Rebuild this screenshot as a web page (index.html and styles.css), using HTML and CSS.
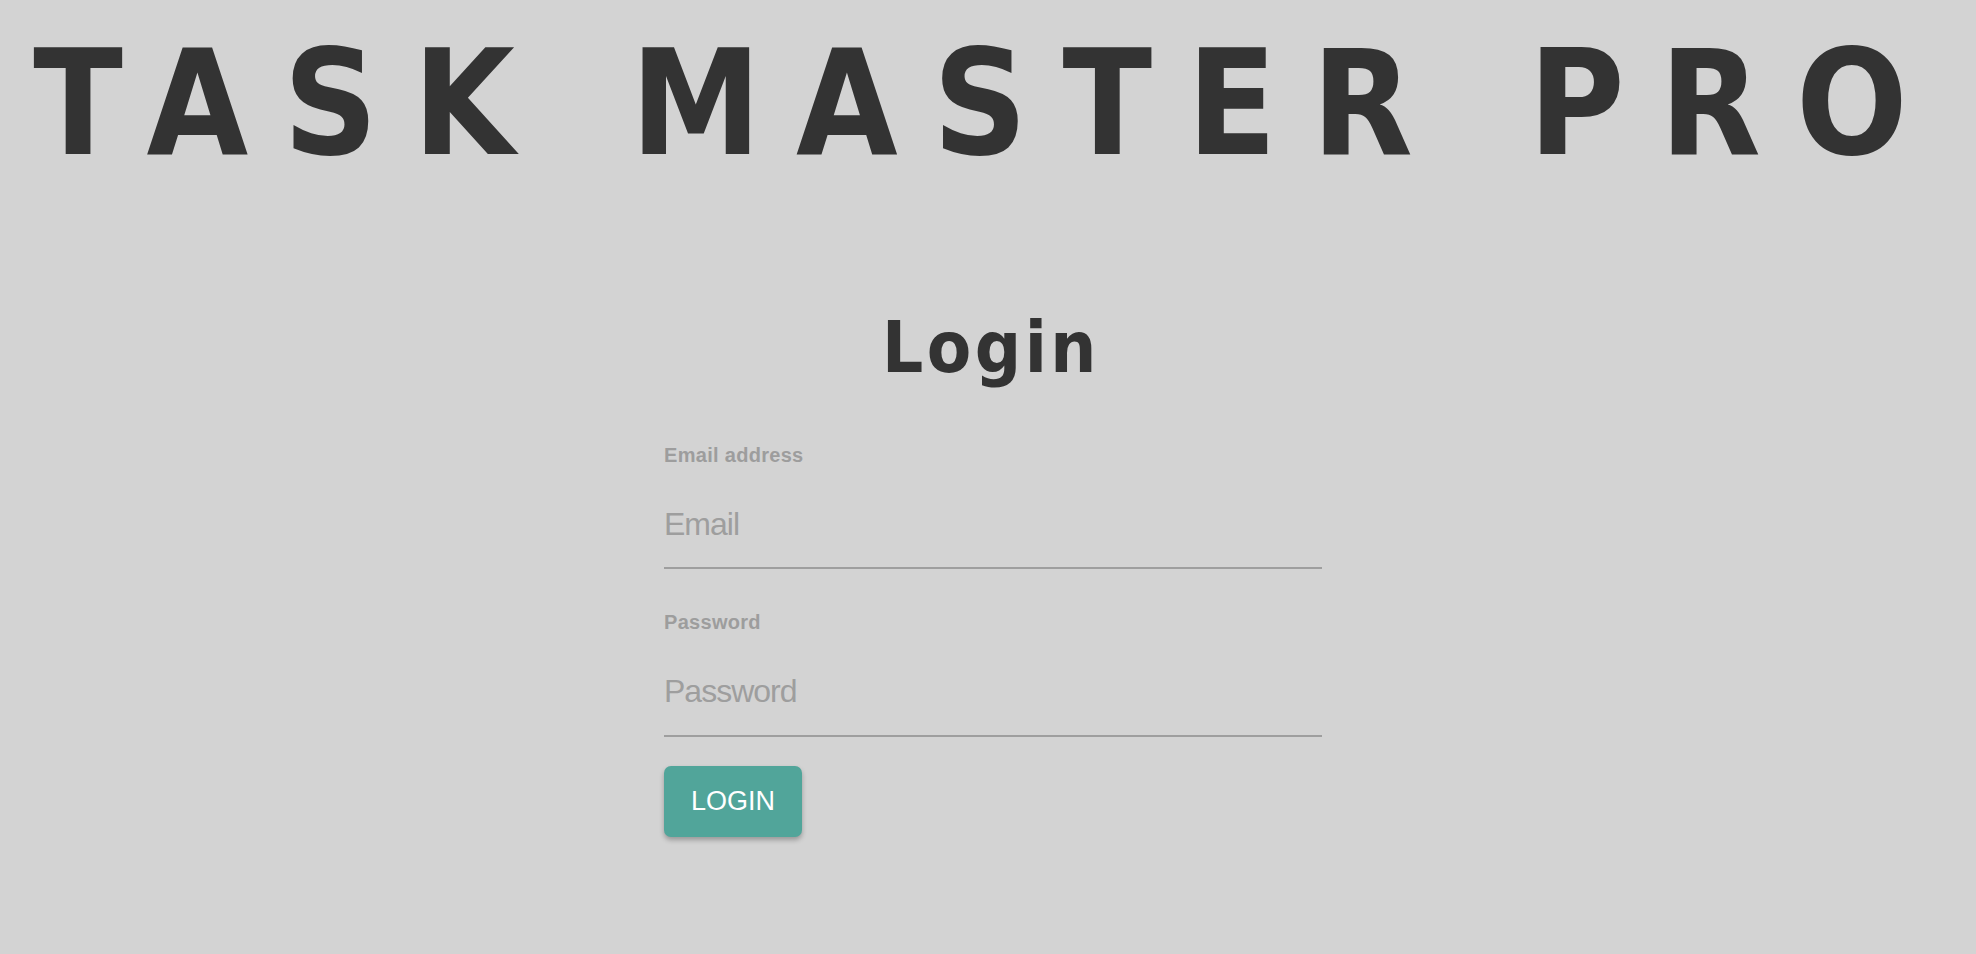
FILE: index.html
```html
<!DOCTYPE html>
<html lang="en">
<head>
<meta charset="utf-8">
<title>Task Master Pro</title>
<link rel="stylesheet" href="styles.css">
</head>
<body>
<header class="brand">
  <h1 class="brand-title">TASK MASTER PRO</h1>
</header>
<main class="login">
  <h2 class="login-title">Login</h2>
  <form class="login-form">
    <div class="field">
      <label class="field-label" for="email">Email address</label>
      <input class="field-input" id="email" type="email" placeholder="Email">
    </div>
    <div class="field">
      <label class="field-label" for="password">Password</label>
      <input class="field-input" id="password" type="password" placeholder="Password">
    </div>
    <button class="login-button" type="button">Login</button>
  </form>
</main>
</body>
</html>
```

FILE: styles.css
```css
html, body {
  margin: 0;
  padding: 0;
}

body {
  background: #d3d3d3;
  min-height: 954px;
  font-family: "Liberation Sans", Arial, sans-serif;
  color: #333333;
}

.brand {
  padding-top: 30px;
}

.brand-title {
  margin: 0;
  font-family: "DejaVu Sans Condensed", "DejaVu Sans", sans-serif;
  font-stretch: condensed;
  font-weight: 700;
  font-size: 146px;
  line-height: 146px;
  letter-spacing: 35px;
  text-align: center;
  color: #333333;
  white-space: nowrap;
}

.login {
  padding-top: 135px;
}

.login-title {
  margin: 0;
  font-family: "DejaVu Sans Condensed", "DejaVu Sans", sans-serif;
  font-stretch: condensed;
  font-weight: 700;
  font-size: 72px;
  line-height: 72px;
  letter-spacing: 3.5px;
  padding-left: 6px;
  text-align: center;
  color: #333333;
}

.login-form {
  width: 658px;
  margin: 62px auto 0;
  padding-left: 10px;
  display: flex;
  flex-direction: column;
  align-items: flex-start;
}

.field {
  width: 100%;
  display: flex;
  flex-direction: column;
  margin-bottom: 43px;
}

.field + .field {
  margin-bottom: 29px;
}

.field-label {
  font-family: "Liberation Sans", Arial, sans-serif;
  font-weight: 700;
  font-size: 20px;
  line-height: 20px;
  letter-spacing: 0.3px;
  color: #9d9d9d;
}

.field-input {
  margin-top: 16px;
  box-sizing: content-box;
  width: 100%;
  height: 86px;
  padding: 0;
  border: none;
  border-bottom: 2px solid #9e9e9e;
  background: transparent;
  outline: none;
  font-family: "Liberation Sans", Arial, sans-serif;
  font-size: 32px;
  letter-spacing: -1px;
  color: #333333;
}

.field + .field .field-input {
  height: 87px;
}

.field-input::placeholder {
  color: #9e9e9e;
  opacity: 1;
}

.login-button {
  box-sizing: border-box;
  width: 138px;
  height: 71px;
  padding: 0;
  border: none;
  border-radius: 7px;
  background: #51a59a;
  color: #ffffff;
  font-family: "Liberation Sans", Arial, sans-serif;
  font-size: 27px;
  text-transform: uppercase;
  box-shadow: 0 3px 5px rgba(0, 0, 0, 0.28);
  cursor: pointer;
}
```
